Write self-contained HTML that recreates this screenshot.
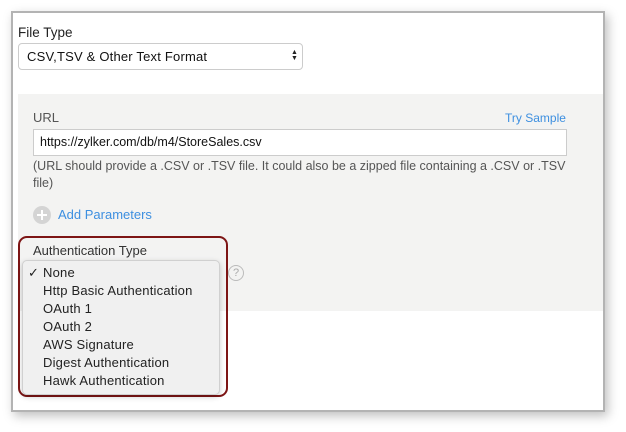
<!DOCTYPE html>
<html><head><style>
body{margin:0;width:626px;height:432px;background:#fff;font-family:"Liberation Sans",sans-serif;position:relative;overflow:hidden}
.a{position:absolute}
.frame{left:11px;top:11px;width:590px;height:397px;border:2px solid #b3b3b3;box-shadow:3px 4px 10px rgba(0,0,0,.25);background:#fff}
.t{font-size:13px;color:#333;white-space:nowrap}
</style></head><body>
<div class="a frame"></div>
<div class="a t" style="left:18px;top:25px;font-size:13.5px;color:#222">File Type</div>
<div class="a" style="left:18px;top:43px;width:283px;height:25px;border:1px solid #ccc;border-radius:4px;background:#fff"></div>
<div class="a t" style="left:27px;top:49px;color:#111;letter-spacing:0.2px">CSV,TSV &amp; Other Text Format</div>
<div class="a" style="left:291px;top:50px;font-size:7px;line-height:6px;color:#222">▲<br>▼</div>
<div class="a" style="left:18px;top:94px;width:585px;height:217px;background:#f3f3f2"></div>
<div class="a t" style="left:33px;top:110px;color:#555">URL</div>
<div class="a t" style="left:505px;top:111px;font-size:12px;color:#3d8fe0">Try Sample</div>
<div class="a" style="left:33px;top:129px;width:532px;height:25px;border:1px solid #ccc;background:#fff"></div>
<div class="a t" style="left:40px;top:135px;font-size:12.5px;color:#111">https://zylker.com/db/m4/StoreSales.csv</div>
<div class="a t" style="left:33px;top:158px;font-size:12.5px;color:#555;line-height:17px">(URL should provide a .CSV or .TSV file. It could also be a zipped file containing a .CSV or .TSV<br>file)</div>
<div class="a" style="left:33px;top:206px;width:18px;height:18px;border-radius:50%;background:#d4d4d4"></div>
<div class="a" style="left:37px;top:214px;width:10px;height:2px;background:#fff"></div>
<div class="a" style="left:41px;top:210px;width:2px;height:10px;background:#fff"></div>
<div class="a t" style="left:58px;top:207px;color:#3d8fe0">Add Parameters</div>
<div class="a" style="left:228px;top:265px;width:14px;height:14px;border:1px solid #bbb;border-radius:50%;font-size:11px;color:#aaa;text-align:center;line-height:14px">?</div>
<div class="a" style="left:18px;top:236px;width:206px;height:157px;border:2px solid #7d1515;border-radius:9px"></div>
<div class="a t" style="left:33px;top:243px;color:#333">Authentication Type</div>
<div class="a" style="left:22px;top:260px;width:196px;height:133px;border:1px solid #d0d0d0;border-radius:5px;background:#f0f0f0;box-shadow:0 2px 6px rgba(0,0,0,.2)"></div>
<div class="a t" style="left:28px;top:264px;line-height:18px;color:#222">✓</div>
<div class="a t" style="left:43px;top:264px;line-height:18px;color:#222;letter-spacing:0.2px">None<br>Http Basic Authentication<br>OAuth 1<br>OAuth 2<br>AWS Signature<br>Digest Authentication<br>Hawk Authentication</div>
</body></html>
